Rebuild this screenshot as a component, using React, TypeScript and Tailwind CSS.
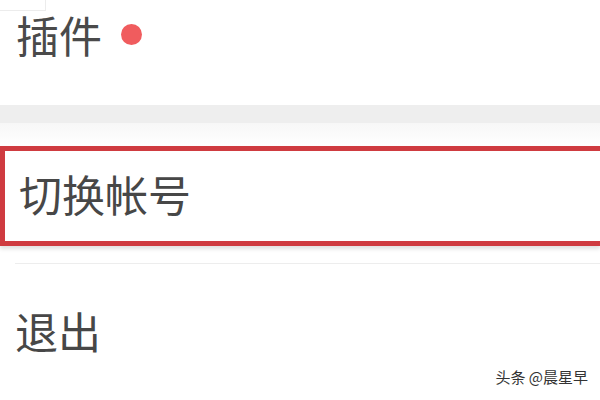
import React from "react";

export default function App() {
  const font = { fontFamily: '"Noto Sans CJK SC", "Noto Sans", sans-serif' };
  return (
    <div className="relative w-[600px] h-[400px] overflow-hidden bg-white" style={font}>
      <div className="absolute top-0 left-0 w-[46px] h-[11px] border-r border-b border-[#ececec]" />
      <div className="h-[105px] pl-[16px] pt-[13px] flex items-start gap-[19px]">
        <span className="text-[43px] leading-none text-[#4a4a4a]">插件</span>
        <span className="mt-[11px] w-[21px] h-[21px] rounded-full bg-[#f05c5e]" />
      </div>
      <div className="h-[18px] bg-[#eeeeee]" />
      <div className="h-[23px] bg-gradient-to-b from-[#f7f7f7] to-white" />
      <div className="h-[100px] border-y-[5px] border-l-[5px] border-[#cf3b40] shadow-[0_3px_4px_rgba(0,0,0,0.12)] pl-[14px] pt-[21px]">
        <span className="text-[43px] leading-none text-[#474747]">切换帐号</span>
      </div>
      <div className="h-[17px]" />
      <div className="h-px ml-[15px] bg-[#ededed]" />
      <div className="pl-[15px] pt-[45px]">
        <span className="text-[43px] leading-none text-[#474747]">退出</span>
      </div>
      <div className="absolute right-[12px] top-[369px] text-[15px] leading-none text-[#333333]">
        头条 @晨星早
      </div>
    </div>
  );
}
